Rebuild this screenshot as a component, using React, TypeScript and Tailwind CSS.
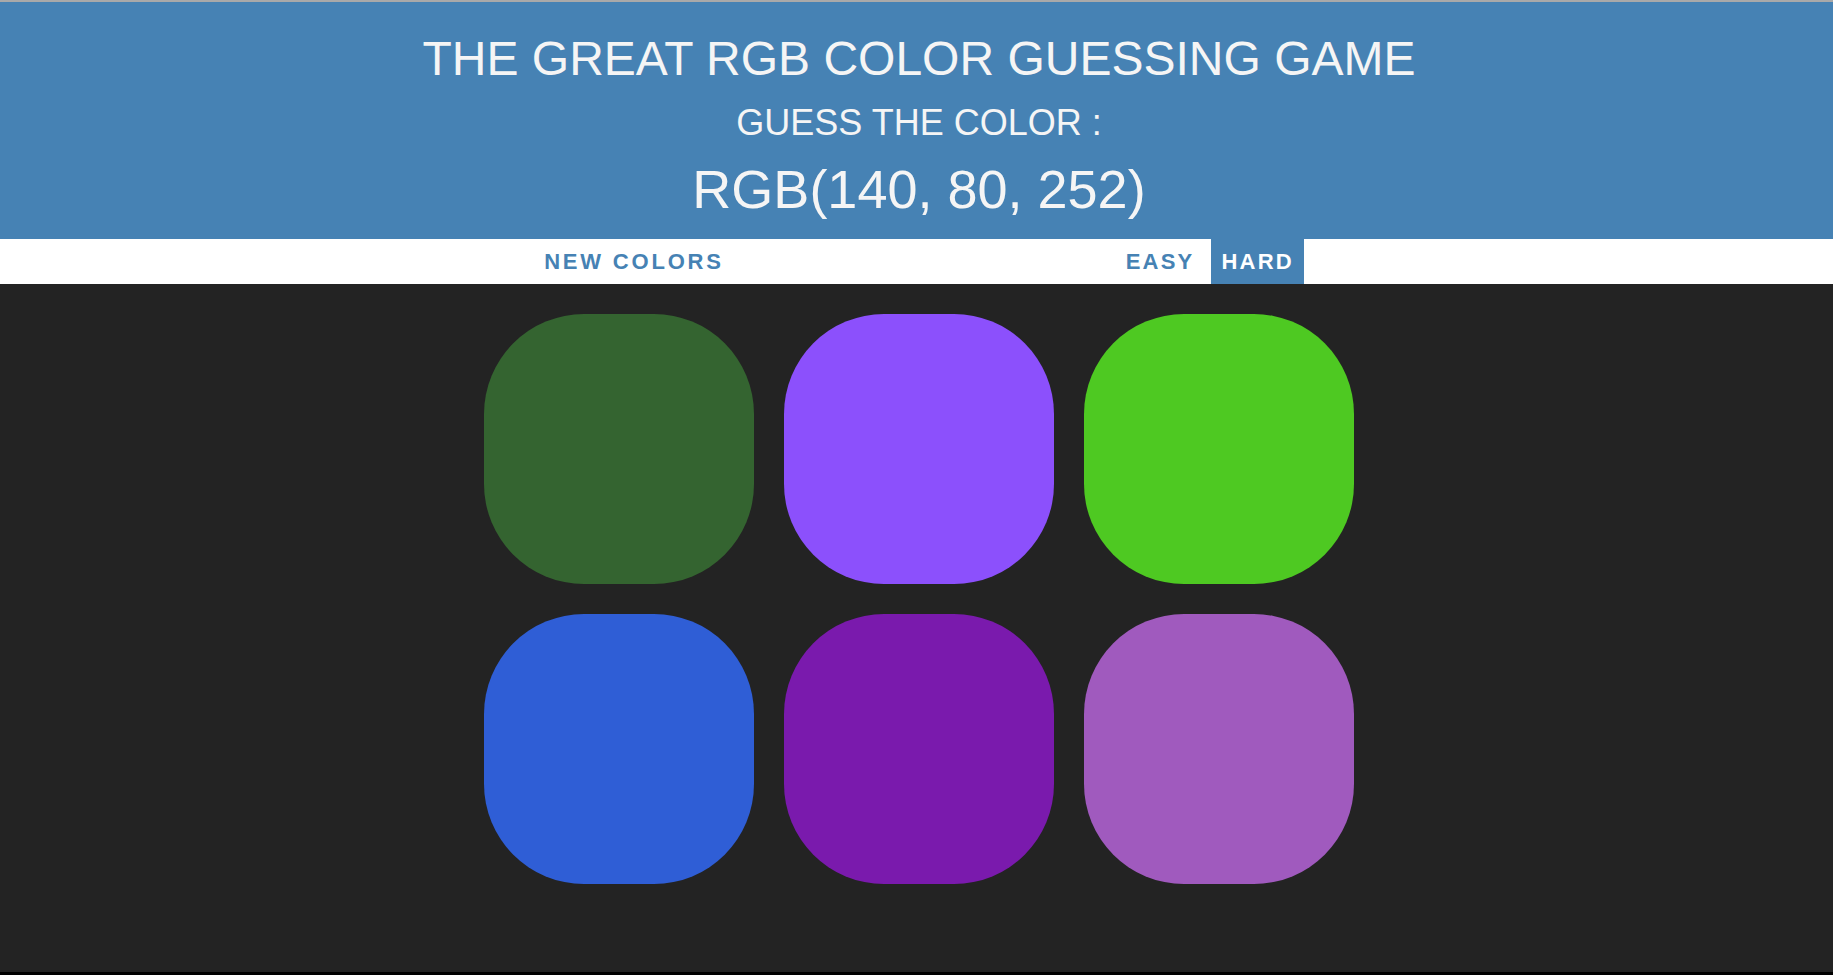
import { useState } from "react";

const squares = [
  "rgb(52, 100, 48)",
  "rgb(140, 80, 252)",
  "rgb(78, 201, 34)",
  "rgb(47, 94, 214)",
  "rgb(122, 26, 173)",
  "rgb(160, 90, 190)",
];

export default function App() {
  const [mode, setMode] = useState<"easy" | "hard">("hard");

  return (
    <main className="flex h-[975px] flex-col bg-[#232323] font-['Liberation_Sans',Arial,sans-serif]">
      <div className="h-[2px] bg-[#a9a9a9]" />

      <header className="flex h-[237px] flex-col items-center bg-[#4682b4] pl-[5px] text-center uppercase text-[#f5f5f5]">
        <h1 className="mt-[33px] text-[48px] font-normal leading-none">The Great RGB Color Guessing Game</h1>
        <p className="mt-[22px] text-[36px] leading-none">Guess the color :</p>
        <p className="mt-[21px] text-[54px] leading-none">RGB(140, 80, 252)</p>
      </header>

      <nav className="flex h-[45px] items-stretch justify-center bg-white pl-[5px] text-[22px] font-bold leading-none">
        <button type="button" className="px-[10px] uppercase tracking-[2.8px] text-[#4682b4]">
          New Colors
        </button>
        <span className="w-[382px]" />
        <button
          type="button"
          className={
            mode === "easy"
              ? "bg-[#4682b4] px-[10px] uppercase tracking-[2.2px] text-white"
              : "px-[10px] uppercase tracking-[2.2px] text-[#4682b4]"
          }
          onClick={() => setMode("easy")}
        >
          Easy
        </button>
        <span className="w-[7px]" />
        <button
          type="button"
          className={
            mode === "hard"
              ? "bg-[#4682b4] px-[10px] uppercase tracking-[2.2px] text-white"
              : "px-[10px] uppercase tracking-[2.2px] text-[#4682b4]"
          }
          onClick={() => setMode("hard")}
        >
          Hard
        </button>
      </nav>

      <section className="flex flex-1 justify-center pl-[5px] pt-[30px]">
        <div className="grid h-fit grid-cols-[repeat(3,270px)] gap-[30px]">
          {(mode === "hard" ? squares : squares.slice(0, 3)).map((color, i) => (
            <div key={i} className="h-[270px] w-[270px] rounded-[100px]" style={{ backgroundColor: color }} />
          ))}
        </div>
      </section>

      <div className="h-[3px] bg-black" />
    </main>
  );
}
